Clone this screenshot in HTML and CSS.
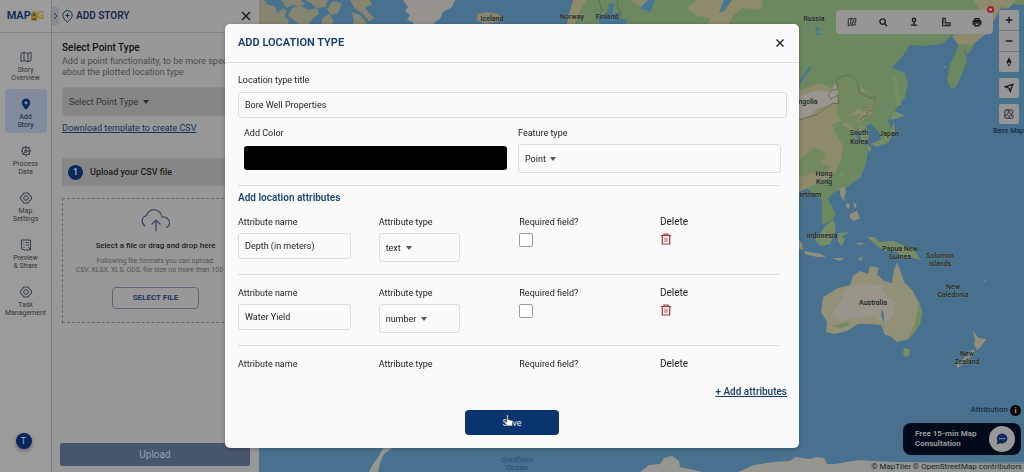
FILE: index.html
```html
<!DOCTYPE html>
<html lang="en">
<head>
<meta charset="utf-8">
<title>Add Location Type</title>
<link rel="stylesheet" href="styles.css">
</head>
<body>
<div class="app">
  <nav class="rail">
    <div class="logo"><span>MAP</span><span class="logo-accent"><svg width="6" height="11" viewBox="0 0 7 12"><path d="M3.500 0a3.500 4 0 0 1 3.500 4v7H0V4a3.500 4 0 0 1 3.500-4z" fill="#8d7a28"/><circle cx="3.500" cy="4" r="1.500" fill="#333f50"/><path d="M1 8h5v2H1z" fill="#5d582f"/></svg>G</span></div>
    <a class="rail-item" href="#"><svg class="ico" viewBox="0 0 12 12"><path d="M1 2.500l3-1.300 4 1.300 3-1.300v8.300L8 10.800 4 9.500l-3 1.300zM4 1.200v8.300M8 2.500v8.300"/></svg>Story<br>Overview</a>
    <a class="rail-item active" href="#"><svg class="ico" viewBox="0 0 12 12"><path d="M6 .5a4.200 4.200 0 0 1 4.200 4.200C10.200 8 6 11.500 6 11.500S1.800 8 1.800 4.700A4.200 4.200 0 0 1 6 .5z" fill="#0b2857" stroke="none"/><path d="M6 3.200v3.200M4.400 4.800h3.200" stroke="#a5aec2"/></svg>Add<br>Story</a>
    <a class="rail-item" href="#"><svg class="ico" viewBox="0 0 12 12"><circle cx="6" cy="6" r="4"/><circle cx="6" cy="6" r="1.300"/><path d="M6 .8v3.500M5 7l-2 2.500M7.500 6h3.500M1 6h1.500M6 10v1.300M2.300 2.300l1 1M8.700 8.700l1 1M9.700 2.300l-1 1"/></svg>Process<br>Data</a>
    <a class="rail-item" href="#"><svg class="ico" viewBox="0 0 12 12"><path d="M3.500 1h5l.7 2L11 4l.5 2-.5 2-1.800 1-.7 2h-5l-.7-2L1 8 .5 6 1 4l1.800-1z"/><circle cx="6" cy="6" r="2.300"/></svg>Map<br>Settings</a>
    <a class="rail-item" href="#"><svg class="ico" viewBox="0 0 12 12"><path d="M1.500 1h9v10h-6l-3-1zM3.500 3.500h1M6 3.500h3M3.500 6h1M6 6h3M3.500 8.500h1M8 8l2.500 2.500"/></svg>Preview<br>&amp; Share</a>
    <a class="rail-item" href="#"><svg class="ico" viewBox="0 0 12 12"><path d="M3.500 1h5l.7 2L11 4l.5 2-.5 2-1.800 1-.7 2h-5l-.7-2L1 8 .5 6 1 4l1.800-1z"/><circle cx="6" cy="6" r="2.300"/></svg>Task<br>Management</a>
    <button class="avatar">T</button>
  </nav>

  <section class="panel">
    <header class="panel-head">
      <button class="collapse" aria-label="Collapse"><svg width="5" height="8" viewBox="0 0 5 8"><path d="M1 1l3 3-3 3" fill="none" stroke="#263244"/></svg></button>
      <svg width="11" height="13" viewBox="0 0 11 13" fill="none" stroke="#13294d"><path d="M5.500 .7A4.600 4.600 0 0 1 10.200 5.300c0 3-4.700 7-4.700 7S.8 8.300.8 5.300A4.600 4.600 0 0 1 5.500 .7zM5.500 3.500v4M3.500 5.500h4"/></svg>
      <h1>ADD STORY</h1>
      <button class="close" aria-label="Close panel"><svg width="10" height="10" viewBox="0 0 10 10"><path d="M1 1l8 8M9 1l-8 8" stroke="#1a1a1a" stroke-width="1.500"/></svg></button>
    </header>
    <div class="panel-body">
      <h2>Select Point Type</h2>
      <p class="hint">Add a point functionality, to be more specific about the plotted location type</p>
      <label class="picker point-picker"><select aria-label="Select Point Type"><option>Select Point Type</option></select><svg class="caret" viewBox="0 0 6 4"><path d="M0 0h6L3 4z"/></svg></label>
      <a class="template" href="#">Download template to create CSV</a>
      <div class="step"><span class="step-no">1</span>Upload your CSV file</div>
      <div class="dropzone">
        <svg width="30" height="25" viewBox="0 0 30 25" fill="none" stroke="#35445f" stroke-width="1.200"><path d="M4 18C0 15 0 9 5.500 7.500 7 2 13 0 17.500 3c2 1.500 3 3.500 3.500 6 4-.5 8 2.500 7.500 6.500-.2 2-1.500 3.500-3.500 4M15 23.500V12M10.500 16.500L15 12l4.500 4.500"/></svg>
        <strong>Select a file or drag and drop here</strong>
        <p>Following file formats you can upload:<br>CSV, XLSX, XLS, ODS, file size no more than 100 MB</p>
        <button class="select-file">SELECT FILE</button>
      </div>
      <button class="upload">Upload</button>
    </div>
  </section>

  <main class="map">
    <svg class="world" viewBox="259 0 765 472" preserveAspectRatio="xMaxYMin slice">
      <rect x="259" width="765" height="472" fill="#47718f"/>
      <g fill="#85846f">
        <path d="M259 0h5l4 5 7 1 2 7 6-5 4 3-3 6 5 2-1 4 5 5h-34z"/>
        <path d="M281 0h20l4 4-7 3-5-2-7 3-2-4zM292 8l9-2 8 4 8-2 2 6-6 4-5 7h-9l-5-5-6-4zM305 0h23l-3 7-9 1-4-4zM350 0h20l2 5-7 3 5 6 5 4-6 3-7-8-7-4zM352 12l8 3 7 8-8 5h-9l4-6zM333 1l9 2-4 10-7 2-4-6zM322 18l7-4 5 7-6 7h-6z"/>
        <path d="M478 14l7-2 11 1 6 4-4 5-13 2-9-4z"/>
      </g>
      <path d="M403 0h52l-3 7-9 5-3 7-5 3-3 6h-17l-2-6-6-2 3-5-5-4 3-4z" fill="#96938e"/>
      <path d="M578 0h446v5l-14-1-5 5-6-2-5 11-7 14-10 7-6 11-4 5-3-7 3 13-5 13-6 13-5 2-4-9 3-16 6-12 3-10-7-7-10 9-20 2-12-1-8 12-10 11 13 5 3 10-3 15-9 11-8 12 4 9-3 13-6 2-4-13-8-8-8 3-7 6 2 7 6 3 4 8-2 13-6 14-13 9-14 6-5 6 5 10 3 5-5 7-9 4V200L640 60l-62-34-4-12z" fill="#6b8860"/>
      <path d="M799 91l20-8 17 7 10-3 11-8 8 12 12 10-5 12-9 7-11 11-11-7-8 6 5 7 5 9-2 13-6 14-13 9-14 6-10 4zM974 0h42l-8 9-6-3-5 9-11 19-14 11-14-1-6-8 13-3 4-6 14-5 8-10-12-2zM573 0l14 0-9 14-4 14h-8l3-14zM630 0l22 0-1 11-10-4zM697 0h66l-2 10-19-2-9 8-8 14h-20l5-11-14-4-9-7z" fill="#8e8a6c"/>
      <path d="M799 96l20-6 12 2 4-9 6 10-5 10-18 5-9 8-10 3z" fill="#99958f"/>
      <path d="M838 83l7-7 8 0 7 6 2 11 6-4 8 7-4 12-9 4-4-4-10 7 5 3-10 5-7-7zM799 160l16-13 11 7-5 10 10 2-7 9-13-2-12 5zM831 125l9-4 10-5 12-3-5 8 5 6-7 2-9-7-10 6z" fill="#728a5e"/>
      <path d="M596 15l10 1 4-13 5 1-3 10 10-2-4 6 10 2-7 8h-19zM648 0l7 0-5 12-10-4zM724 0h8l-8 11-5 2zM815 26l6 3-5 2 6 4h-5zM812 67l-11 15-2-1 11-15z" fill="#447798"/>
      <path d="M599 0l3 11-5 7M617 0l1 9 3 5-4 8M799 120l17-5 17-12 6 1-1-9-7 4-3-4 4-5 6-1-2-9 7-4h8l6 6 3 11 10 5 6-1-3 13-5 1-1 5-5 1-2 4M799 204l7 3" fill="none" stroke="#5c6750" stroke-width=".8"/>
      <g fill="#778d65">
        <path d="M893 74l4 4 2 12 2 15-5 0-1-12zM894 111l7 3 4 2-10 3-5 1zM894 121l1 10-7 10-11 6-7-3 12-5 8-7zM867 144l5 4-3 4-3-5zM842 171l2 3-2 5-2-3zM858 126l7-2 4 10-1 7-6 2-2-8zM815 240l5-6 5-8 8-6 3 6-2 10-4 8-9 2zM838 233l12-1-8 4 3 3-3 7-4-4zM867 237l8 0 4 5 14-1 10 4 10 4 8 11-11-3-6 2-7-7-11-1-9-5z"/>
        <path d="M904 348l6 1-1 7-4 1-2-4z"/>
      </g>
      <g fill="#929077">
        <path d="M839 188l6-1 1 5-2 6 2 4-5-5zM850 214l7-3 3 7-6 3-4-3zM846 203l4 1-1 5-2-1zM853 202l4 3-2 4zM799 240l3 3 1 7-4-1zM804 251l17 3 5 3-9 0-12-3zM832 258l12 0-4 3zM856 243l9 0-5 2zM857 259l6-2-2 4z"/>
        <path d="M823 297l15-9 12-3 3-9 7-5 8 3 2-8 9 2-2 6 7 7 8 2 2-13 3-8 4 10 3 10 8 8 6 11 4 9-2 11-6 11-5 7-12 3-7-6-5-1-4-10-11-1-12 0-11 7-12 3-9-2 1-10-6-10z"/>
        <path d="M973 330l3 5 3 3 7 1-5 8-4 3-3-5 1-5zM973 349l2 3-6 6-5 5-6 5-2-3 9-8zM984 280l3 1-2 1zM944 66l2 1-2 1z"/>
        <path d="M369 472l4-8 6-8 4-8 12-2-11 8-4 9-2 9zM640 472l9-7 11-1 4-6 8-2 7 5 1 6 23 5zM738 472l16-7 19-3 17-1 5-4 15 2 6-2 8 1 3 6 8 0 24-4 14 1 24 1 127 2v8z" fill="#97958f"/>
      </g>
      <path d="M847 288l15-5 11 3 8-2 5 12 9 6-2 13-7 9-12-8-23 3-12 2-7-6 7-12z" fill="#99958a"/>
      <path d="M919 301l3 12-2 12-8 11-5 3 8-15zM834 326l12-4 4 2-9 4zM830 228l2 6-6 5 3-8z" fill="#758a5e"/>
      <path d="M881 316l1-7 2 5 0 9z" fill="#507b8a"/>
      <g class="place">
        <text x="492" y="21">Iceland</text><text x="572" y="19">Norway</text><text x="607" y="19">Finland</text>
        <text x="814" y="21">Russia</text><text x="803" y="104">Mongolia</text>
        <text x="859" y="135">South</text><text x="859" y="144">Korea</text><text x="889" y="136">Japan</text>
        <text x="824" y="176">Hong</text><text x="824" y="184">Kong</text><text x="808" y="197">Vietnam</text>
        <text x="822" y="238">Indonesia</text><text x="900" y="251">Papua New</text><text x="900" y="259">Guinea</text>
        <text x="940" y="258">Solomon</text><text x="940" y="266">Islands</text><text x="953" y="289">New</text><text x="953" y="297">Caledonia</text>
        <text x="873" y="305">Australia</text><text x="967" y="356">New</text><text x="967" y="364">Zealand</text>
        <g class="ocean"><text x="517" y="462">Southern</text><text x="517" y="470">Ocean</text></g>
      </g>
    </svg>
    <div class="map-ui">
      <div class="map-top">
        <div class="toolbar">
          <button aria-label="Map search"><svg class="tool" viewBox="0 0 12 12"><path d="M1.500 2.500l3-1 3 1 3-1v5M1.500 2.500v8l3-1 3 1M4.500 1.500v8M7.500 2.500v3"/><circle cx="8" cy="7.500" r="1.800"/><path d="M9.300 9l1.700 1.500"/></svg></button>
          <button aria-label="Search"><svg class="tool bold" viewBox="0 0 12 12"><circle cx="5.500" cy="5.500" r="3.300"/><path d="M8 8l3 3"/></svg></button>
          <button aria-label="Place"><svg class="tool bold" viewBox="0 0 12 12"><circle cx="6" cy="3.500" r="2"/><path d="M6 5.500v4M2 9.800h8"/></svg></button>
          <button aria-label="Measure"><svg class="tool" viewBox="0 0 12 12"><path d="M2 1.500h3V7h6v3.500H2zM2 4h1.500M2 6.500h1.500M6 10V8.500M8.500 10V8.500" stroke-width="1.300"/></svg></button>
          <button aria-label="Print"><svg class="tool bold" viewBox="0 0 12 12"><path d="M3.500 4V2h5v2M3 8.500H1.500V5L3 4h6l1.500 1v3.500H9M3.500 7h5v3.500h-5z"/><path d="M2 5.500h8"/></svg></button>
          <span class="dot"></span>
        </div>
        <div class="controls">
          <div class="zoom">
            <button aria-label="Zoom in"><svg class="tool bold" viewBox="0 0 12 12"><path d="M6 2v8M2 6h8"/></svg></button>
            <button aria-label="Zoom out"><svg class="tool bold" viewBox="0 0 12 12"><path d="M2 6h8"/></svg></button>
            <button aria-label="North"><svg class="tool" viewBox="0 0 12 12"><path d="M6 .5L9 6 7.500 7.500 6 6 4.500 7.500 3 6z" fill="#151515" stroke="none"/><path d="M3.500 6L6 11l2.500-5"/></svg></button>
          </div>
          <button class="single" aria-label="Locate"><svg class="tool bold" viewBox="0 0 12 12"><path d="M10.500 1.500L7.500 10 6 6.300 1.500 4.500z"/></svg></button>
          <button class="single" aria-label="Base map"><svg class="tool" viewBox="0 0 12 12"><path d="M7 1H2.500Q1 1 1 2.500v7Q1 11 2.500 11h7Q11 11 11 9.500V8M1 7.500h2.500l1.500-2V1M6 11V8.500l2-1h3M8.800 6.500L7 4a2 2 0 1 1 3.600 0z"/></svg></button>
          <span class="base-label">Base Map</span>
        </div>
      </div>
      <div class="map-bottom">
        <div class="attribution">Attribution <span class="info">i</span></div>
        <button class="consult"><span>Free 15-min Map<br>Consultation</span><span class="bubble"><svg width="14" height="14" viewBox="0 0 14 14"><path d="M7 1.500a5.500 5 0 1 1-2 9.700L1.500 12.500l1-3A5.300 5.300 0 0 1 7 1.500z" fill="#0d2a5c"/><path d="M4 6.700h1.500M6.300 6.700h1.500M8.600 6.700h1.500" stroke="#8f99ad" stroke-width="1.300"/></svg></span></button>
        <div class="credits"><a href="#">© MapTiler</a> <a href="#">© OpenStreetMap contributors</a></div>
      </div>
    </div>
  </main>
</div>

<div class="backdrop">
  <form class="modal" role="dialog" aria-labelledby="dlg-title">
    <header class="modal-head">
      <h2 id="dlg-title">ADD LOCATION TYPE</h2>
      <button type="button" class="close" aria-label="Close"><svg width="10" height="10" viewBox="0 0 10 10"><path d="M1.500 1.500l7 7M8.500 1.500l-7 7" stroke="#222" stroke-width="1.400"/></svg></button>
    </header>
    <div class="modal-body">
      <div class="field"><label for="title">Location type title</label><input class="text" id="title" type="text" value="Bore Well Properties"></div>
      <div class="pair">
        <div class="field"><label for="color">Add Color</label><input class="swatch" id="color" type="color" value="#000000"></div>
        <div class="field"><label for="feature">Feature type</label><div class="picker"><select id="feature"><option>Point</option></select><svg class="caret" viewBox="0 0 6 4"><path d="M0 0h6L3 4z"/></svg></div></div>
      </div>
      <h3>Add location attributes</h3>
      <div class="attr">
        <div class="field name"><label for="n1">Attribute name</label><input class="text" id="n1" type="text" value="Depth (in meters)"></div>
        <div class="field type"><label for="t1">Attribute type</label><div class="picker"><select id="t1"><option>text</option></select><svg class="caret" viewBox="0 0 6 4"><path d="M0 0h6L3 4z"/></svg></div></div>
        <div class="field"><label for="r1">Required field?</label><input class="check" id="r1" type="checkbox"></div>
        <div class="field"><span class="delete">Delete</span><button type="button" class="trash" aria-label="Delete attribute"><svg width="12" height="12" viewBox="0 0 12 12"><path d="M1 2.500h10M4 2.500V1h4v1.500M2.300 2.500V11h7.400V2.500" fill="none" stroke="#a3313a" stroke-width="1.200"/><path d="M5 4.500v4.500M7 4.500v4.500" stroke="#b5565c"/></svg></button></div>
      </div>
      <div class="attr">
        <div class="field name"><label for="n2">Attribute name</label><input class="text" id="n2" type="text" value="Water Yield"></div>
        <div class="field type"><label for="t2">Attribute type</label><div class="picker"><select id="t2"><option>number</option></select><svg class="caret" viewBox="0 0 6 4"><path d="M0 0h6L3 4z"/></svg></div></div>
        <div class="field"><label for="r2">Required field?</label><input class="check" id="r2" type="checkbox"></div>
        <div class="field"><span class="delete">Delete</span><button type="button" class="trash" aria-label="Delete attribute"><svg width="12" height="12" viewBox="0 0 12 12"><path d="M1 2.500h10M4 2.500V1h4v1.500M2.300 2.500V11h7.400V2.500" fill="none" stroke="#a3313a" stroke-width="1.200"/><path d="M5 4.500v4.500M7 4.500v4.500" stroke="#b5565c"/></svg></button></div>
      </div>
      <div class="attr last">
        <span>Attribute name</span><span>Attribute type</span><span>Required field?</span><span class="delete">Delete</span>
      </div>
    </div>
    <footer class="modal-foot">
      <a class="add" href="#">+ Add attributes</a>
      <button type="button" class="save">Save<svg class="cursor" viewBox="0 0 12 14"><path d="M4 1.500c0-1 1.600-1 1.600 0V6l4 .8c1 .2 1.400.8 1.200 1.700L10 13H4.500L1 8.500c-.5-.9.600-1.600 1.300-1L4 9z" fill="#fff" stroke="#222" stroke-width=".7"/></svg></button>
    </footer>
  </form>
</div>
</body>
</html>
```

FILE: styles.css
```css
* { box-sizing: border-box; }
html, body { height: 100%; }
body { margin: 0; overflow: hidden; font: 9px/12px Roboto, "Liberation Sans", sans-serif; color: #222; }
h1, h2, h3, p { margin: 0; }
button, input, select { font: inherit; color: inherit; }
button { border: 0; padding: 0; background: none; cursor: pointer; }
svg { display: block; flex: none; }

.app { display: flex; height: 100vh; min-height: 472px; background: #999; }

/* Navigation rail */
.rail { flex: none; width: 52px; display: flex; flex-direction: column; align-items: center; gap: 3px; padding-bottom: 23px; border-right: 1px solid #7d7d7d; background: #9b9b9b; }
.logo { display: flex; align-items: center; justify-content: center; align-self: stretch; height: 33px; margin-bottom: 6px; padding-top: 0; border-bottom: 1px solid #858585; font-size: 11px; font-weight: 700; color: #14305a; }
.logo-accent { display: flex; align-items: center; color: #97801f; }
.rail-item { display: flex; flex-direction: column; align-items: center; width: 42px; height: 44px; padding-top: 9px; border-radius: 4px; font-size: 7px; line-height: 8px; text-align: center; text-decoration: none; color: #333; }
.ico { width: 12px; height: 12px; margin-bottom: 3px; fill: none; stroke: #333b48; stroke-width: 1; }
.active { background: #838b9f; color: #13233f; }
.avatar { margin-top: auto; width: 16px; height: 16px; margin-right: 4px; border-radius: 50%; background: #08265a; color: #9fb0c8; box-shadow: 0 2px 4px #0005; }

/* Story panel */
.panel { flex: none; width: 207px; display: flex; flex-direction: column; background: #989898; }
.panel-head { display: flex; align-items: center; height: 33px; padding-right: 8px; gap: 3px; border-bottom: 1px solid #858585; }
.panel-head h1 { flex: 1; font-size: 10px; font-weight: 600; color: #13294d; }
.collapse { width: 7px; height: 18px; display: grid; place-items: center; background: #858b95; border-radius: 0 2px 2px 0; }
.panel-body { flex: 1; display: flex; flex-direction: column; padding: 8px 10px 6px; }
.panel-body h2 { font-size: 10px; line-height: 13px; font-weight: 500; color: #111; }
.hint { color: #4a4a4a; line-height: 11px; margin: 2px 0 9px; }
.picker { display: flex; align-items: center; gap: 4px; height: 29px; padding: 0 6px; border: 1px solid #ddd; border-radius: 3px; }
.picker select { appearance: none; border: 0; padding: 0; background: none; outline: 0; }
.caret { width: 6px; height: 4px; fill: #555; }
.point-picker { background: #868686; border-color: #8b8b8b; color: #333; }
.point-picker .caret { fill: #2a2a2a; }
.template { margin: 6px 0 24px; color: #14305a; }
.step { display: flex; align-items: center; gap: 7px; height: 28px; padding: 0 6px; background: #878787; color: #1a1a1a; font-weight: 500; border-radius: 2px; }
.step-no { width: 15px; height: 15px; line-height: 15px; text-align: center; border-radius: 50%; background: #0a2a5c; color: #aab4c5; }
.dropzone { display: flex; flex-direction: column; align-items: center; height: 125px; margin-top: 12px; padding-top: 9px; border: 1px dashed #666; white-space: nowrap; }
.dropzone strong { margin-top: 7px; font-size: 8px; font-weight: 500; color: #1c1c1c; }
.dropzone p { margin: 5px 0 12px; font-size: 7px; line-height: 9px; text-align: center; color: #505050; }
.select-file { width: 87px; height: 22px; border: 1px solid #5c6676; border-radius: 4px; font-size: 8px; font-weight: 600; color: #14305a; }
.upload { height: 23px; margin: auto -1px 0 -2px; border-radius: 2px; background: #47566d; color: #97a0ad; font-size: 10px; }

/* Map */
.map { flex: 1; min-width: 0; display: grid; overflow: hidden; }
.world, .map-ui { grid-area: 1 / 1; }
.world { width: 100%; height: 100%; }
.place { font: 500 7px Roboto, sans-serif; text-anchor: middle; fill: #202522; stroke: #8f9989; stroke-width: 1; stroke-opacity: .4; paint-order: stroke; }
.ocean { font-size: 8px; font-style: italic; fill: #2f5475; stroke: none; }
.map-ui { display: flex; flex-direction: column; justify-content: space-between; z-index: 1; }
.map-top { display: flex; justify-content: flex-end; align-items: flex-start; padding-top: 10px; }
.toolbar { position: relative; display: flex; justify-content: space-around; width: 157px; height: 24px; border-radius: 4px; background: #969696; }
.tool { width: 10px; height: 10px; fill: none; stroke: #1b1b1b; stroke-width: 1; }
.tool.bold { stroke-width: 1.6; }
.dot { position: absolute; right: -1px; top: -4px; width: 7px; height: 7px; border-radius: 50%; border: 2px solid #981e32; background: #b9929a; }
.controls { display: flex; flex-direction: column; align-items: center; width: 31px; gap: 6px; }
.zoom { display: flex; flex-direction: column; gap: 1px; background: #777; border-radius: 2px; overflow: hidden; }
.zoom button, .single { display: grid; place-items: center; width: 20px; height: 20px; background: #969696; }
.single { border-radius: 2px; }
.base-label { font-size: 7px; line-height: 8px; white-space: nowrap; color: #081c35; margin-top: -3px; }
.map-bottom { display: flex; flex-direction: column; align-items: flex-end; }
.attribution { display: flex; align-items: center; gap: 2px; padding-right: 3px; font-size: 8px; color: #0d1c2b; }
.info { width: 11px; height: 11px; border-radius: 50%; background: #080808; color: #b0a792; line-height: 11px; text-align: center; font-weight: 700; }
.consult { display: flex; align-items: center; justify-content: space-between; width: 118px; height: 32px; margin: 7px 3px 7px 0; padding: 0 6px 0 12px; border-radius: 8px; background: #020b1b; color: #9c9c9c; text-align: left; font-size: 8px; line-height: 10px; font-weight: 700; }
.bubble { display: grid; place-items: center; width: 26px; height: 26px; border-radius: 50%; background: #999; }
.credits { padding: 0 2px 0 4px; font-size: 8px; line-height: 10px; background: #8a93988c; white-space: nowrap; }
.credits a { color: #222; text-decoration: none; }

/* Dialog */
.backdrop { position: fixed; inset: 0; z-index: 2; display: flex; align-items: center; justify-content: center; }
.modal { width: 100%; max-width: 574px; border-radius: 5px; background: #fbfafb; box-shadow: 0 1px 4px #0004; }
.modal-head { display: flex; align-items: center; justify-content: space-between; height: 39px; padding: 0 14px 0 13px; border-bottom: 1px solid #ddd; }
.modal-head h2 { font-size: 11px; font-weight: 600; color: #173a6c; }
.modal-body { padding: 11px 20px 0 13px; }
.field { display: flex; flex-direction: column; gap: 6px; min-width: 0; }
.text { width: 100%; height: 26px; padding: 0 6px; border: 1px solid #ddd; border-radius: 3px; background: transparent; }
.modal-body > .field { margin-right: -8px; }
.pair { display: grid; grid-template-columns: 1fr 1fr; gap: 11px; margin: 9px -2px 0 6px; padding-bottom: 12px; }
.pair .field { gap: 5px; }
.swatch { width: 100%; height: 24px; margin-top: 2px; padding: 0; border: 0; border-radius: 3px; appearance: none; background: #000; overflow: hidden; }
.swatch::-webkit-color-swatch-wrapper { padding: 0; }
.swatch::-webkit-color-swatch { border: 0; }
.modal h3 { padding-top: 6px; border-top: 1px solid #ddd; font-size: 10px; font-weight: 600; color: #204577; }
.attr { display: grid; grid-template-columns: 26% 26% 26% 1fr; height: 71px; padding-top: 12px; border-bottom: 1px solid #ddd; }
.attr .field { gap: 5px; }
.attr .name { width: 80%; }
.attr .type { width: 58%; }
.attr .check { appearance: none; width: 14px; height: 14px; margin: 0; border: 1px solid #999; border-radius: 2px; background: #fff; }
.attr .trash { align-self: flex-start; }
.delete { font-size: 10px; }
.attr.last { height: 33px; border: 0; }
.modal-foot { display: flex; flex-direction: column; align-items: center; gap: 12px; padding: 7px 12px 13px; }
.add { align-self: flex-end; font-size: 10px; font-weight: 500; color: #173a6c; }
.save { position: relative; width: 94px; height: 25px; border-radius: 4px; background: #0a3470; color: #e4eaf4; }
.cursor { position: absolute; left: 38px; top: 4px; width: 11px; height: 13px; }
```
